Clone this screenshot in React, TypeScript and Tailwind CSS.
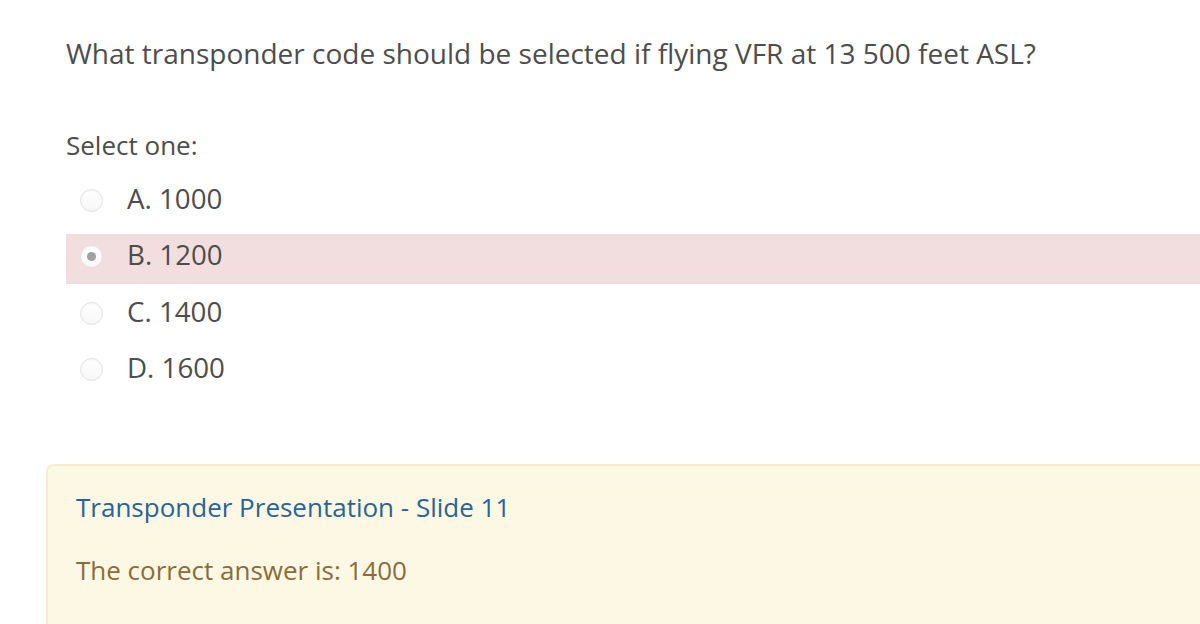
import React from "react";

const options = [
  { label: "A. 1000", checked: false },
  { label: "B. 1200", checked: true },
  { label: "C. 1400", checked: false },
  { label: "D. 1600", checked: false },
];

function Radio({ checked }: { checked: boolean }) {
  return (
    <span className="mb-[4px] flex items-center justify-center w-[23px] h-[23px] rounded-full border border-[#e2e2e2] bg-gradient-to-b from-white to-[#f7f7f7] shadow-[inset_0_1px_2px_rgba(0,0,0,0.04)]">
      {checked && <span className="w-[9px] h-[9px] rounded-full bg-[#a0a0a0]" />}
    </span>
  );
}

export default function App() {
  return (
    <div className="w-[1200px] h-[624px] overflow-hidden bg-white font-['Open_Sans',sans-serif]">
      <div className="pl-[66px] pt-[34px]">
        <p className="text-[28px] leading-[38px] text-[#4d4d4d]">
          What transponder code should be selected if flying VFR at 13 500 feet ASL?
        </p>
        <p className="mt-[55px] text-[26px] leading-[36px] text-[#4d4d4d]">Select one:</p>
        <div className="mt-[14px] flex flex-col gap-[6.5px]">
          {options.map(o => (
            <div
              key={o.label}
              className={`flex items-center h-[50px] pl-[14px] ${o.checked ? "bg-[#f2dede]" : ""}`}
            >
              <Radio checked={o.checked} />
              <span className="mb-[9px] ml-[24px] text-[27.7px] leading-[38px] text-[#4d4d4d]">{o.label}</span>
            </div>
          ))}
        </div>
      </div>
      <div className="ml-[46px] mt-[67px] h-[200px] rounded-tl-[8px] border-l-2 border-t-2 border-[#faebcc] bg-[#fcf8e3] pl-[28px] pt-[23px]">
        <p className="text-[26px] leading-[36px] text-[#2a6496]">Transponder Presentation - Slide 11</p>
        <p className="mt-[27px] text-[26px] leading-[36px] text-[#8a6d3b]">The correct answer is: 1400</p>
      </div>
    </div>
  );
}
